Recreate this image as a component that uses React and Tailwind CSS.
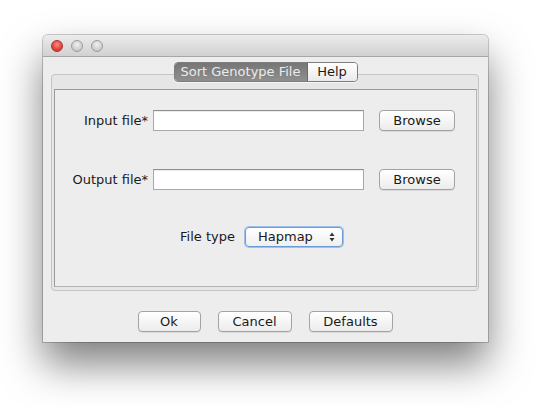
const FONT = { fontFamily: '"DejaVu Sans", "Lucida Grande", sans-serif' };

function Light({ red }) {
  return (
    <span
      className={
        red
          ? "block w-[12px] h-[12px] rounded-full border border-[#a9322c] bg-[radial-gradient(circle_at_50%_35%,#f98b84,#e0443c_60%,#c6302a)]"
          : "block w-[12px] h-[12px] rounded-full border border-[#9c9c9c] bg-[radial-gradient(circle_at_50%_35%,#f0f0f0,#d0d0d0_60%,#bababa)]"
      }
    />
  );
}

function Btn({ children, w }) {
  return (
    <button
      className={`${w} h-[21px] flex items-center justify-center rounded-[4px] border border-[#a3a3a3] bg-gradient-to-b from-white to-[#ececec] text-[13px] leading-none text-[#1a1a1a] shadow-[0_1px_0_rgba(0,0,0,0.08)]`}
    >
      {children}
    </button>
  );
}

function Field() {
  return (
    <div className="w-[211px] h-[21px] bg-white border border-[#a9a9a9] border-t-[#8e8e8e] shadow-[inset_0_1px_1px_rgba(0,0,0,0.08)]" />
  );
}

function FileRow({ label }) {
  return (
    <div className="flex items-center h-[21px]">
      <div className="w-[93px] text-right text-[13px] text-[#1a1a1a]">{label}</div>
      <div className="ml-[5px] flex">
        <Field />
      </div>
      <div className="ml-[15px] flex">
        <Btn w="w-[76px]">Browse</Btn>
      </div>
    </div>
  );
}

export default function App() {
  return (
    <div className="w-[545px] h-[406px] bg-white overflow-hidden pt-[35px] pl-[43px]" style={FONT}>
      <div className="w-[445px] h-[307px] rounded-t-[5px] bg-[#ededed] shadow-[0_22px_40px_rgba(0,0,0,0.5),0_0_0_1px_rgba(0,0,0,0.2)] flex flex-col">
        {/* title bar */}
        <div className="h-[22px] rounded-t-[5px] bg-gradient-to-b from-[#ececec] to-[#d1d1d1] border-b border-[#a6a6a6] flex items-center gap-[8px] pl-[8px]">
          <Light red />
          <Light />
          <Light />
        </div>

        {/* tabs */}
        <div className="px-[8px] pr-[9px] pt-[5px]">
          <div className="relative z-10 flex justify-center pl-[1px]">
            <div className="flex h-[20px] rounded-[4px] border border-[#7d7d7d] overflow-hidden text-[13px] shadow-[0_1px_0_rgba(255,255,255,0.6)]">
              <div className="w-[133px] flex items-center justify-center bg-gradient-to-b from-[#767676] to-[#8f8f8f] text-[#ebebeb] border-r border-[#6a6a6a]">
                Sort Genotype File
              </div>
              <div className="w-[49px] flex items-center justify-center bg-gradient-to-b from-white to-[#eaeaea] text-[#1a1a1a]">
                Help
              </div>
            </div>
          </div>

          <div className="-mt-[8px] h-[217px] rounded-[4px] border border-[#c4c4c4] bg-[#e6e6e6] pt-[14px] pl-[2px] pr-[1px] pb-[3px]">
            <div className="h-full border border-[#9a9a9a] border-b-[#b5b5b5] border-r-[#b5b5b5] bg-[#ededed] pt-[20px]">
              <FileRow label="Input file*" />
              <div className="h-[38px]" />
              <FileRow label="Output file*" />
              <div className="h-[37px]" />
              <div className="flex items-center justify-center gap-[10px] pr-[8px] h-[20px]">
                <span className="text-[13px] text-[#1a1a1a]">File type</span>
                <div className="w-[98px] h-[20px] rounded-[4px] border border-[#6b9bd6] shadow-[0_0_0_1px_#9ec0ea] bg-gradient-to-b from-white to-[#efefef] flex items-center pl-[12px] pr-[7px] text-[13px] text-[#1a1a1a]">
                  <span className="flex-1">Hapmap</span>
                  <svg width="6" height="10" viewBox="0 0 6 10">
                    <path d="M3 0.5 L5.5 4 L0.5 4 Z" fill="#333" />
                    <path d="M3 9.5 L5.5 6 L0.5 6 Z" fill="#333" />
                  </svg>
                </div>
              </div>
            </div>
          </div>
        </div>

        {/* bottom buttons */}
        <div className="flex justify-center gap-[17px] mt-[20px] pr-[1px]">
          <Btn w="w-[63px]">Ok</Btn>
          <Btn w="w-[74px]">Cancel</Btn>
          <Btn w="w-[84px]">Defaults</Btn>
        </div>
      </div>
    </div>
  );
}
